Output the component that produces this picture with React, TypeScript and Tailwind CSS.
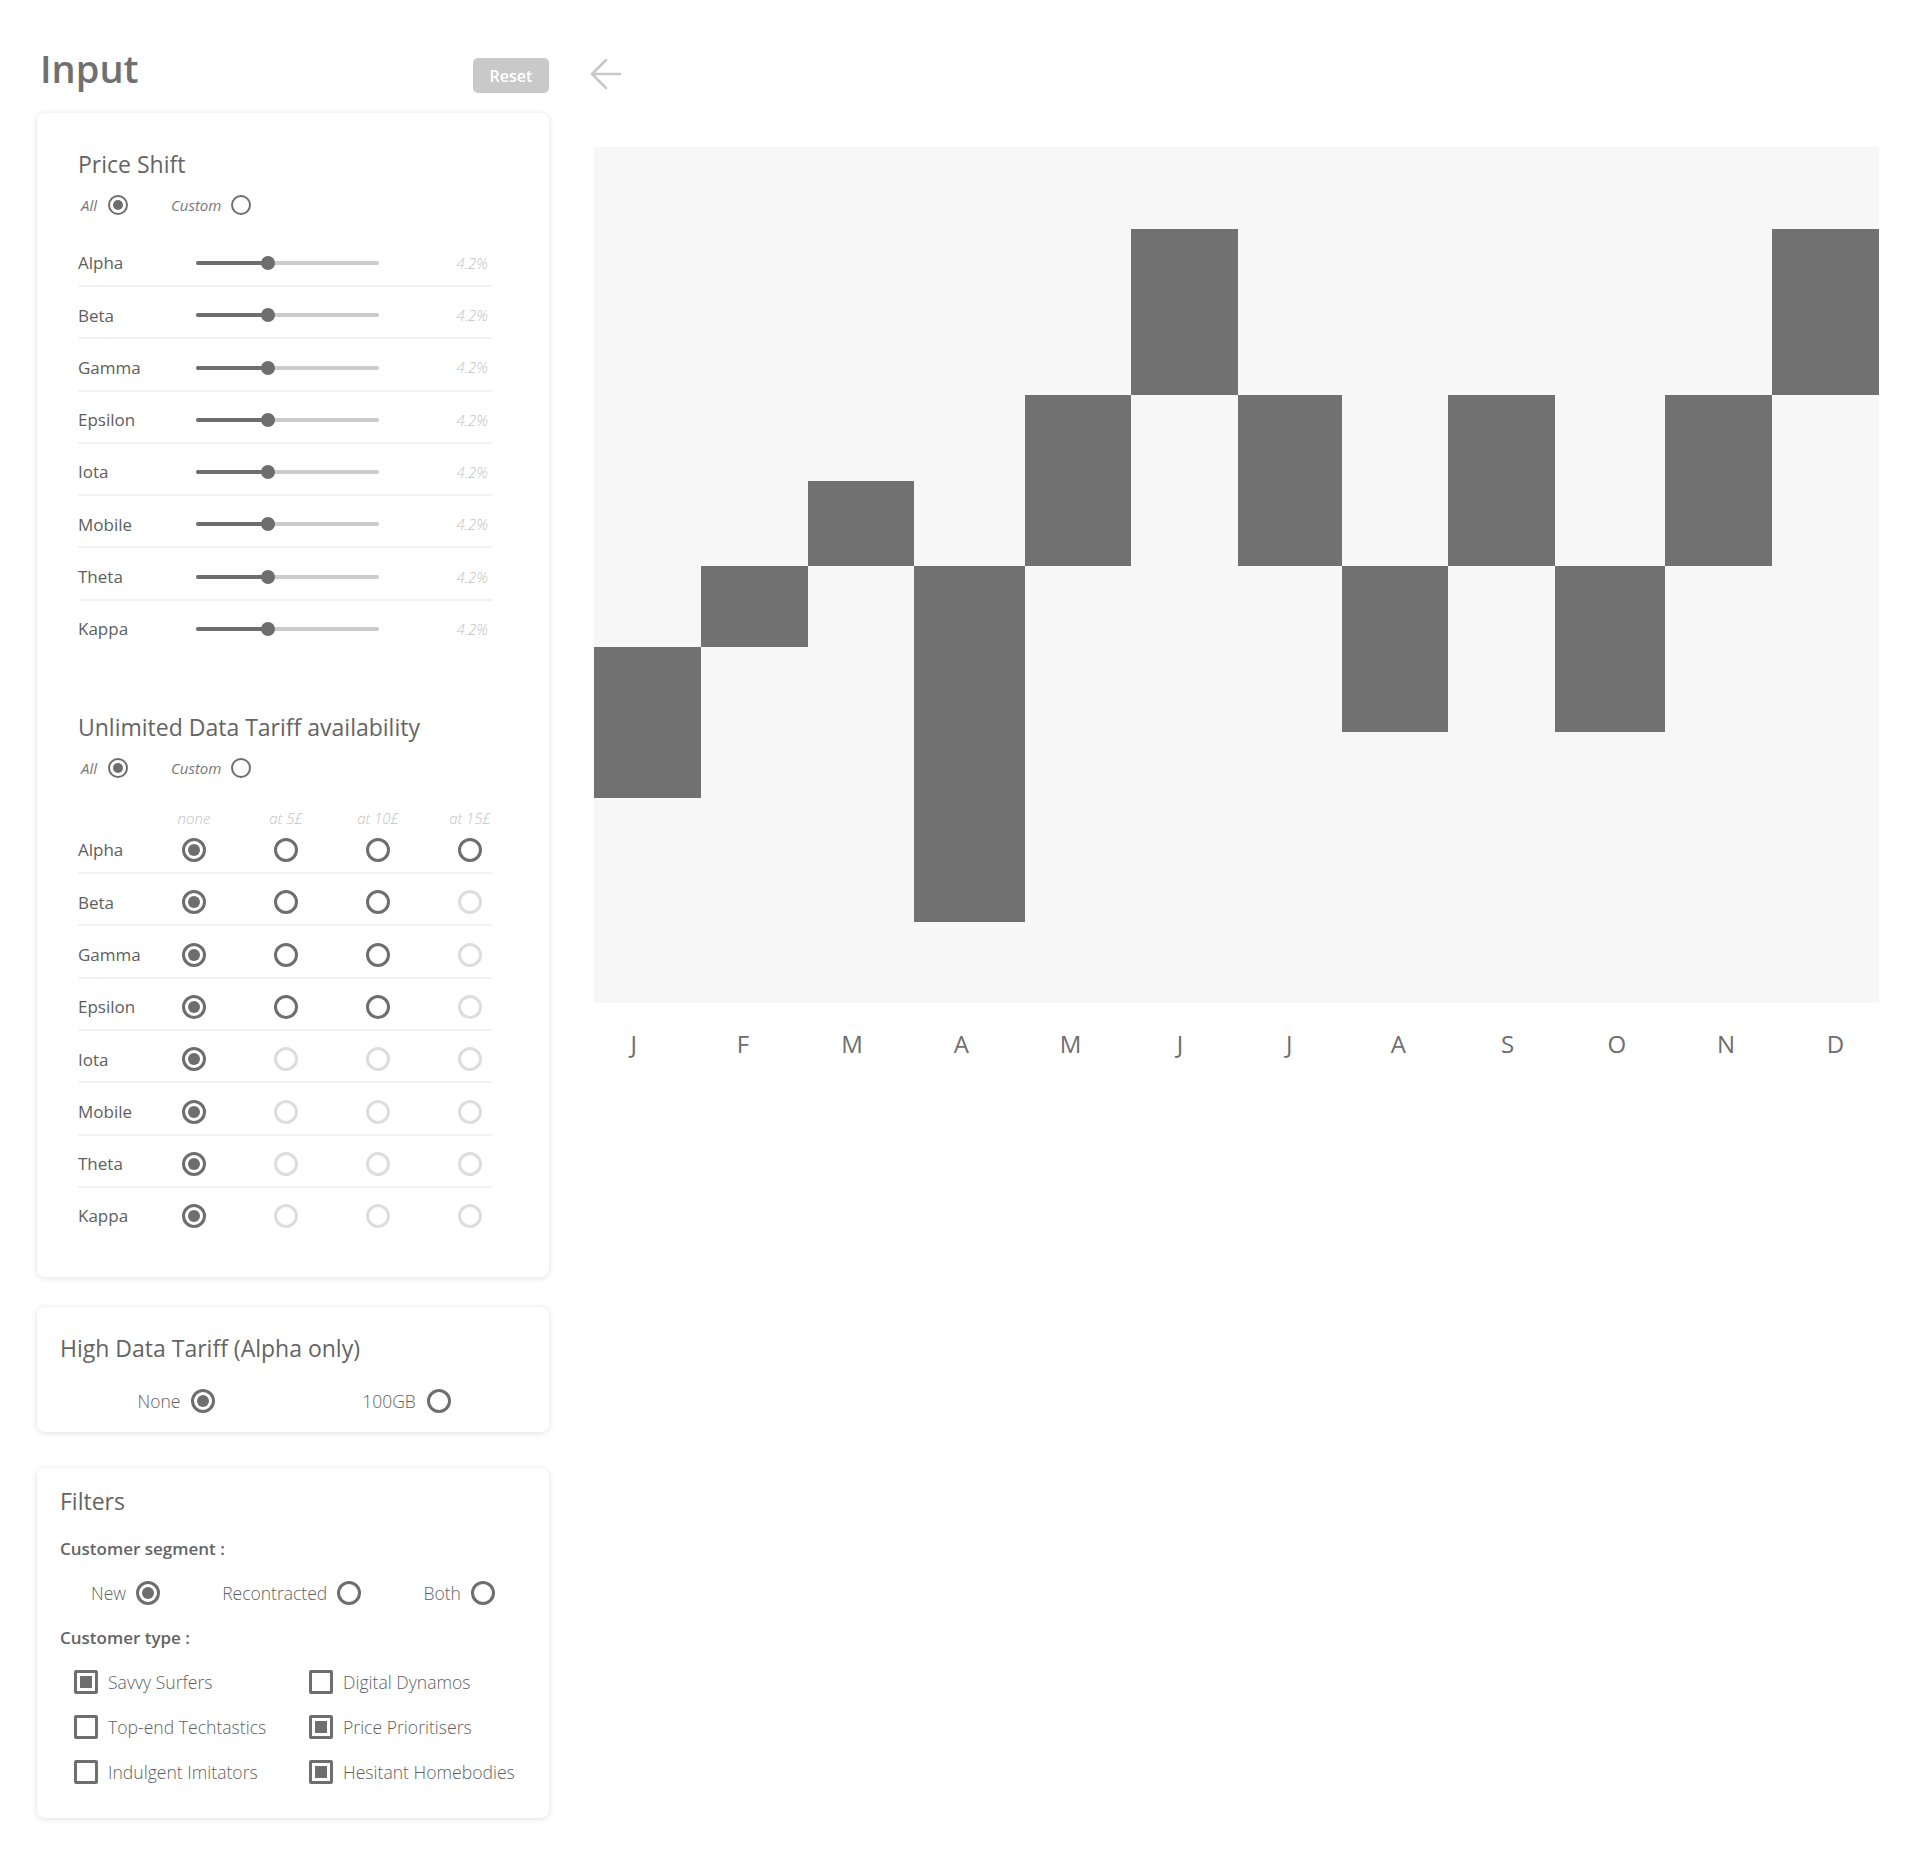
import React from 'react';
import clsx from 'clsx';
import { ArrowLeft } from 'lucide-react';

const sliderRows = ['Alpha', 'Beta', 'Gamma', 'Epsilon', 'Iota', 'Mobile', 'Theta', 'Kappa'];

// how many of the 4 tariff options are enabled per row
const tariffRows: { name: string; enabled: number }[] = [
  { name: 'Alpha', enabled: 4 },
  { name: 'Beta', enabled: 3 },
  { name: 'Gamma', enabled: 3 },
  { name: 'Epsilon', enabled: 3 },
  { name: 'Iota', enabled: 1 },
  { name: 'Mobile', enabled: 1 },
  { name: 'Theta', enabled: 1 },
  { name: 'Kappa', enabled: 1 },
];

const tariffCols = ['none', 'at 5£', 'at 10£', 'at 15£'];

// waterfall chart: column edges and top/bottom in px of a 1285x856 plot
const edges = [0, 107, 214, 320, 431, 537, 644, 748, 854, 961, 1071, 1178, 1285];
const bars = [
  [500, 651],
  [419, 500],
  [334, 419],
  [419, 775],
  [248, 419],
  [82, 248],
  [248, 419],
  [419, 585],
  [248, 419],
  [419, 585],
  [248, 419],
  [82, 248],
];

const months = ['J', 'F', 'M', 'A', 'M', 'J', 'J', 'A', 'S', 'O', 'N', 'D'];

const customerTypes = [
  { label: 'Savvy Surfers', checked: true },
  { label: 'Digital Dynamos', checked: false },
  { label: 'Top-end Techtastics', checked: false },
  { label: 'Price Prioritisers', checked: true },
  { label: 'Indulgent Imitators', checked: false },
  { label: 'Hesitant Homebodies', checked: true },
];

const Radio = ({ checked = false, disabled = false, small = false }: { checked?: boolean; disabled?: boolean; small?: boolean }) => (
  <span
    className={clsx(
      'flex shrink-0 items-center justify-center rounded-full bg-white',
      small ? 'h-[20px] w-[20px] border-[2.5px]' : 'h-[24px] w-[24px] border-[3px]',
      disabled ? 'border-[#dddddd]' : 'border-[#6e6e6e]'
    )}
  >
    {checked && <span className={clsx('rounded-full bg-[#6e6e6e]', small ? 'h-[10px] w-[10px]' : 'h-[12px] w-[12px]')} />}
  </span>
);

const Checkbox = ({ checked }: { checked: boolean }) => (
  <span className="flex h-[24px] w-[24px] shrink-0 items-center justify-center rounded-[2px] border-[3px] border-[#6e6e6e]">
    {checked && <span className="h-[12px] w-[12px] bg-[#6e6e6e]" />}
  </span>
);

const AllCustom = () => (
  <div className="mt-[13px] flex h-[24px] items-center text-[15px] italic text-[#777777]">
    <span className="ml-[3px]">All</span>
    <span className="ml-[11px]"><Radio small checked /></span>
    <span className="ml-[43px]">Custom</span>
    <span className="ml-[10px]"><Radio small /></span>
  </div>
);

const Separator = () => <div className="mb-[6.3px] h-[2px] w-[414px] bg-[#f3f3f3]" />;

const Card = ({ className, children }: { className?: string; children: React.ReactNode }) => (
  <section className={clsx('rounded-[8px] bg-white shadow-[0_1px_6px_rgba(0,0,0,0.13)]', className)}>{children}</section>
);

const App: React.FC = () => {
  return (
    <div className="min-h-[1859px] bg-white font-['Open_Sans',sans-serif] text-[#646464]">
      <div className="flex pl-[37px] pr-[41px] pt-[48px]">
        <aside className="w-[512px] shrink-0">
          <div className="flex items-start justify-between">
            <h1 className="pl-[3px] text-[38px] font-semibold leading-[40px] text-[#707070]">Input</h1>
            <button className="mt-[10px] h-[35px] w-[76px] rounded-[5px] bg-[#c9c9c9] text-[16px] font-semibold text-white">
              Reset
            </button>
          </div>

          <Card className="mt-[20px] pb-[39px] pl-[41px] pr-[57px] pt-[35px]">
            <h2 className="text-[23px] leading-[32px]">Price Shift</h2>
            <AllCustom />
            <div className="mt-[24px]">
              {sliderRows.map((name, i) => (
                <div key={name}>
                  <div className="flex h-[44px] items-center">
                    <span className="w-[118px] shrink-0 text-[17px] text-[#5e5e5e]">{name}</span>
                    <div className="relative h-[4px] w-[183px] shrink-0 rounded-full bg-[#cccccc]">
                      <div className="h-[4px] w-[72px] rounded-full bg-[#6e6e6e]" />
                      <span className="absolute left-[65px] top-[-5px] h-[14px] w-[14px] rounded-full bg-[#6e6e6e]" />
                    </div>
                    <span className="flex-1 pr-[4px] text-right text-[15px] font-light italic text-[#c2c2c2]">4.2%</span>
                  </div>
                  {i < sliderRows.length - 1 && <Separator />}
                </div>
              ))}
            </div>

            <h2 className="mt-[60px] text-[23px] leading-[32px]">Unlimited Data Tariff availability</h2>
            <AllCustom />
            <div className="mt-[28px] flex h-[20px] items-center text-[15px] font-light italic leading-[20px] text-[#c2c2c2]">
              <span className="w-[70px] shrink-0" />
              {tariffCols.map((c) => (
                <span key={c} className="w-[92px] shrink-0 text-center">{c}</span>
              ))}
            </div>
            <div>
              {tariffRows.map((row, i) => (
                <div key={row.name}>
                  <div className="flex h-[44px] items-center">
                    <span className="w-[70px] shrink-0 text-[17px] text-[#5e5e5e]">{row.name}</span>
                    {tariffCols.map((c, j) => (
                      <span key={c} className="flex w-[92px] shrink-0 justify-center">
                        <Radio checked={j === 0} disabled={j >= row.enabled} />
                      </span>
                    ))}
                  </div>
                  {i < tariffRows.length - 1 && <Separator />}
                </div>
              ))}
            </div>
          </Card>

          <Card className="mt-[30px] px-[23px] pb-[20px] pt-[25px]">
            <h2 className="text-[23px] leading-[32px]">High Data Tariff (Alpha only)</h2>
            <div className="mt-[24px] grid h-[24px] grid-cols-2 text-[17.5px] font-light text-[#5f5f5f]">
              <div className="flex items-center justify-center gap-[11px]">
                <span>None</span>
                <Radio checked />
              </div>
              <div className="flex items-center justify-center gap-[11px] pr-[6px]">
                <span>100GB</span>
                <Radio />
              </div>
            </div>
          </Card>

          <Card className="mt-[36px] px-[23px] pb-[34px] pt-[17px]">
            <h2 className="text-[23px] leading-[32px]">Filters</h2>
            <p className="mt-[20px] text-[17px] font-semibold leading-[24px]">Customer segment :</p>
            <div className="mt-[20px] flex h-[24px] items-center justify-around text-[17.5px] font-light text-[#5f5f5f]">
              <div className="flex items-center gap-[10px]">
                <span>New</span>
                <Radio checked />
              </div>
              <div className="flex items-center gap-[10px]">
                <span>Recontracted</span>
                <Radio />
              </div>
              <div className="flex items-center gap-[10px]">
                <span>Both</span>
                <Radio />
              </div>
            </div>
            <p className="mt-[21px] text-[17px] font-semibold leading-[24px]">Customer type :</p>
            <div className="mt-[20px] grid grid-cols-[235px_1fr] gap-y-[21px] pl-[14px] text-[17.6px] font-light text-[#5f5f5f]">
              {customerTypes.map((t) => (
                <label key={t.label} className="flex h-[24px] items-center gap-[10px]">
                  <Checkbox checked={t.checked} />
                  <span>{t.label}</span>
                </label>
              ))}
            </div>
          </Card>
        </aside>

        <main className="ml-[33px] flex-1">
          <ArrowLeft size={48} strokeWidth={1.25} className="mt-[2px] text-[#c8c8c8]" />
          <div className="ml-[12px] mt-[49px]">
            <svg className="block h-[856px] w-full" viewBox="0 0 1285 856" preserveAspectRatio="none">
              <rect x="0" y="0" width="1285" height="856" fill="#f7f7f7" />
              {bars.map(([top, bottom], i) => (
                <rect
                  key={i}
                  x={edges[i]}
                  y={top}
                  width={edges[i + 1] - edges[i]}
                  height={bottom - top}
                  fill="#717171"
                  shapeRendering="crispEdges"
                />
              ))}
            </svg>
            <div className="-ml-[15px] -mr-[11px] mt-[26px] grid grid-cols-12 text-[24px] leading-[30px] text-[#6e6e6e]">
              {months.map((m, i) => (
                <span key={i} className="text-center">{m}</span>
              ))}
            </div>
          </div>
        </main>
      </div>
    </div>
  );
};

export default App;
